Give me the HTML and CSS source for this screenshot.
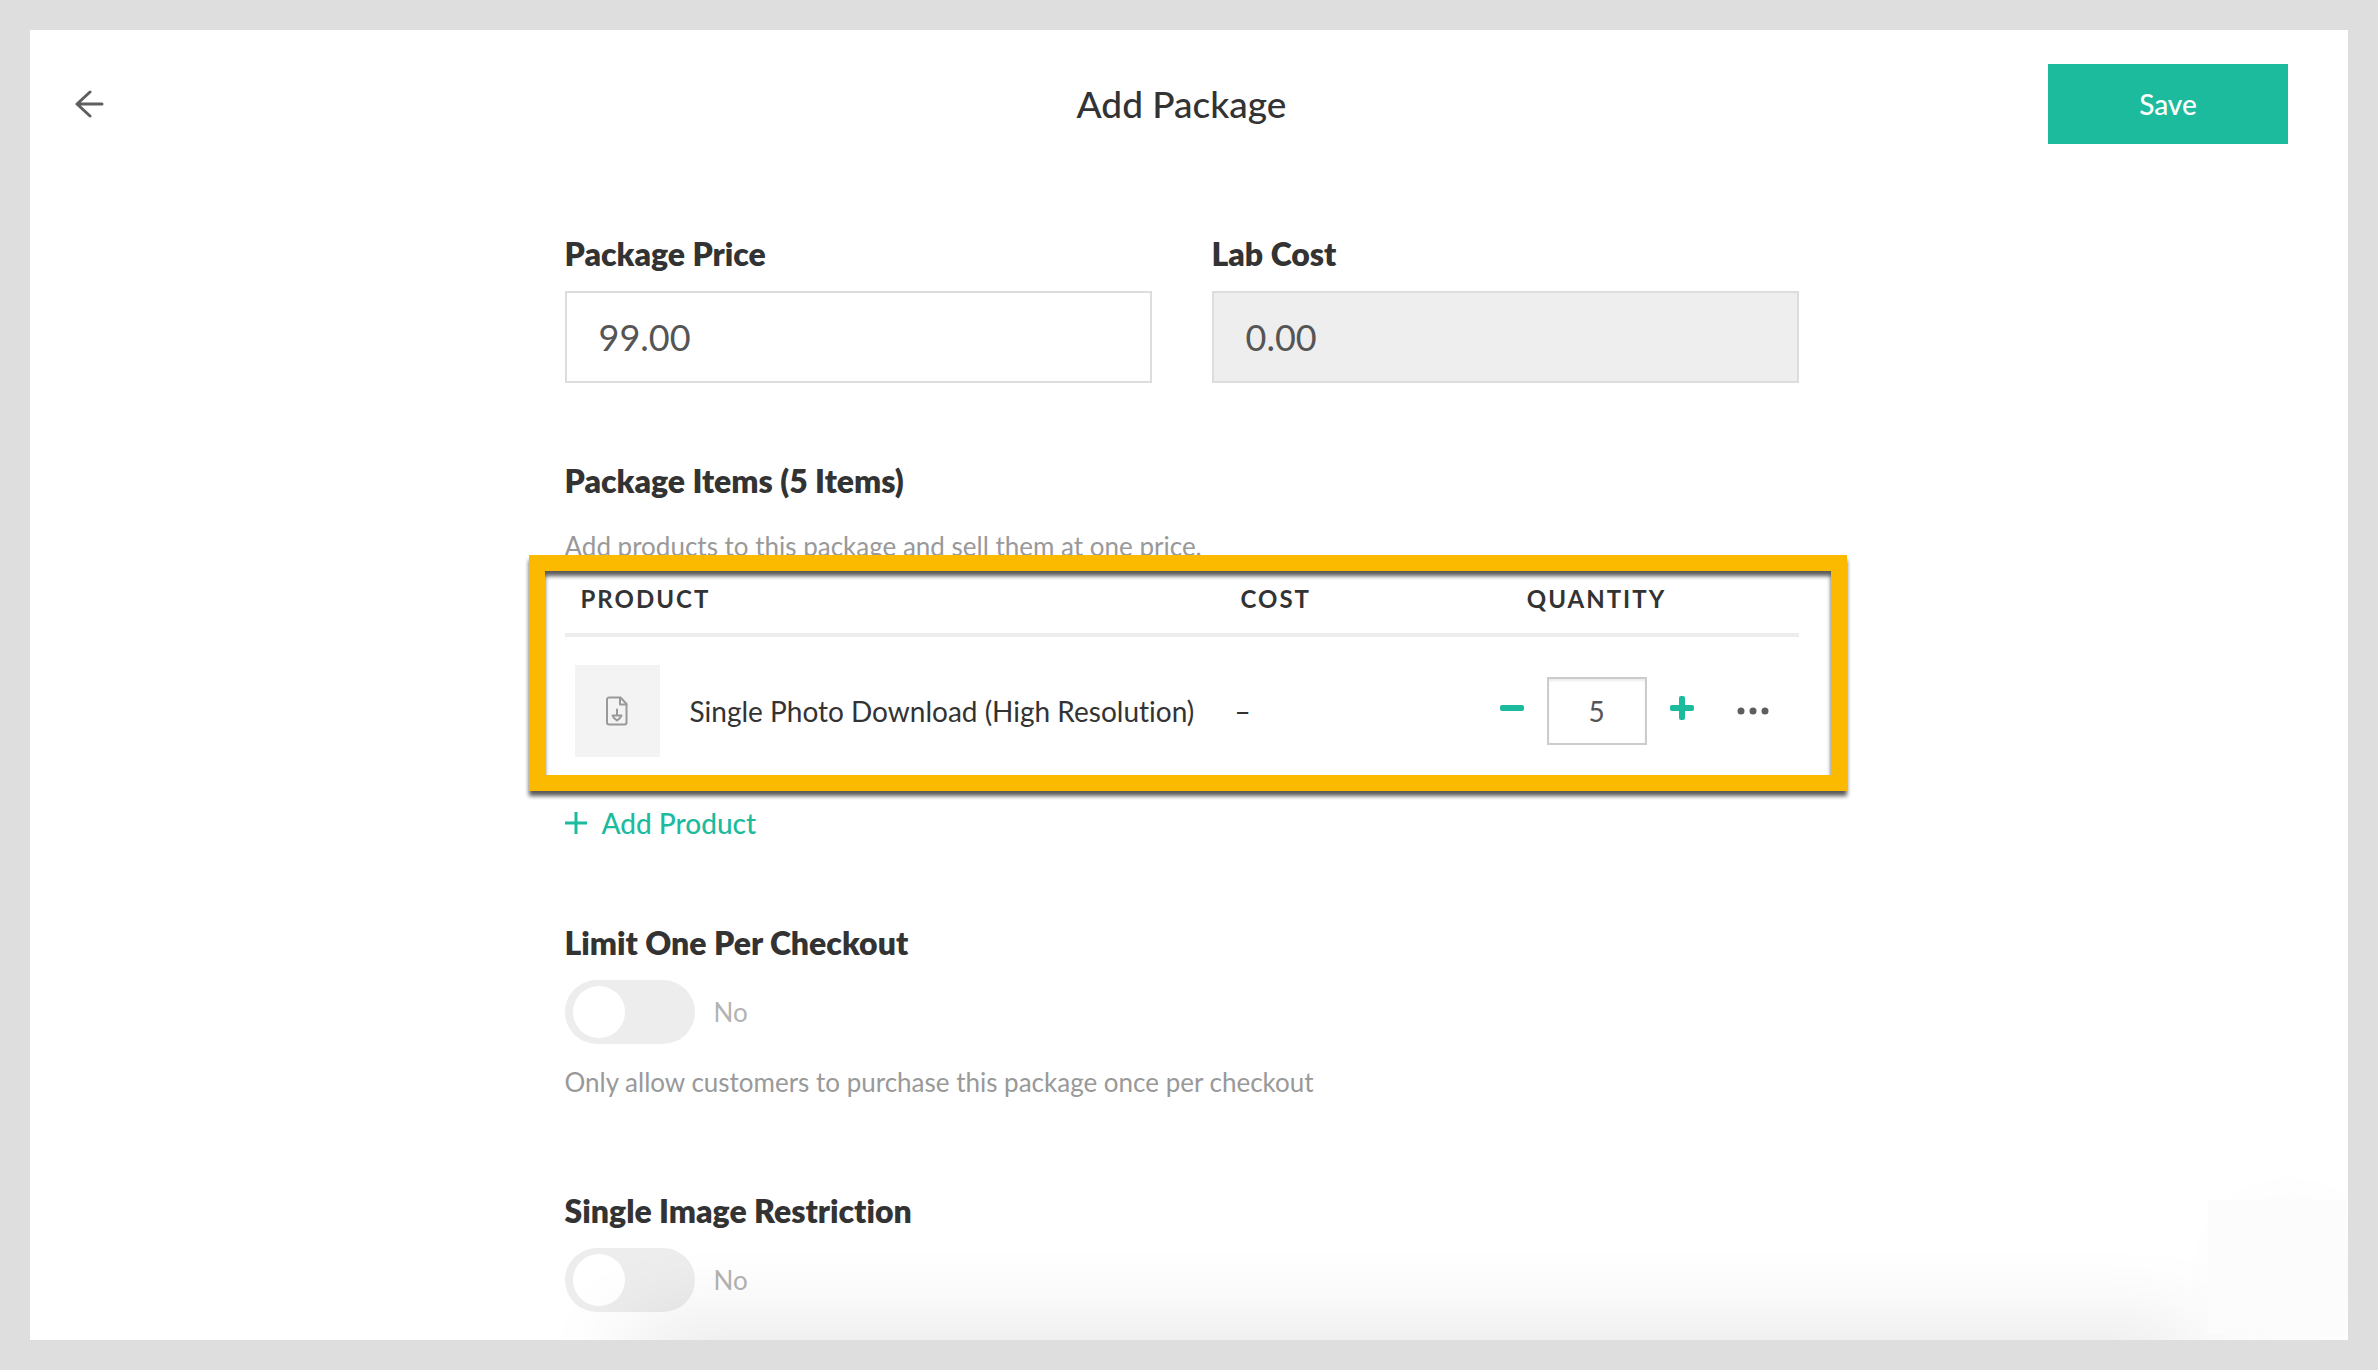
FILE: index.html
```html
<!DOCTYPE html>
<html lang="en">
<head>
  <meta charset="UTF-8" />
  <meta name="viewport" content="width=device-width, initial-scale=1" />
  <title>Add Package</title>
  <link rel="stylesheet" href="styles.css">
</head>
<body>
  <div class="panel">
    <header class="topbar">
      <button type="button" class="icon-btn back-btn" aria-label="Back">
        <svg width="30" height="30" viewBox="0 0 30 30" fill="none" stroke="#5e5e5e" stroke-width="3" stroke-linecap="round" stroke-linejoin="round">
          <path d="M27 15H2M15 3L2 15l13 12" />
        </svg>
      </button>
      <h1>Add Package</h1>
      <button type="submit" form="packageForm" class="save-btn">Save</button>
    </header>

    <form id="packageForm" class="form">
      <div class="price-row">
        <div class="field">
          <label class="title" for="price">Package Price</label>
          <input class="text-input" type="text" id="price" value="99.00" />
        </div>
        <div class="field">
          <label class="title" for="lab_cost">Lab Cost</label>
          <input class="text-input" type="text" id="lab_cost" value="0.00" disabled />
        </div>
      </div>

      <section class="items">
        <h2 class="title">Package Items (5 Items)</h2>
        <p class="hint">Add products to this package and sell them at one price.</p>

        <div class="table-wrap">
          <table class="items-table">
            <thead>
              <tr>
                <th class="col-product">PRODUCT</th>
                <th class="col-cost">COST</th>
                <th class="col-qty">QUANTITY</th>
                <th class="col-menu"></th>
              </tr>
            </thead>
            <tbody>
              <tr>
                <td>
                  <div class="product">
                    <span class="thumb">
                      <svg width="22" height="30" viewBox="0 0 22 30" fill="none" stroke="#999" stroke-width="2" stroke-linejoin="round" stroke-linecap="round">
                        <path d="M3 1.500h11.500L20.500 8v18.500a2 2 0 0 1-2 2H3a2 2 0 0 1-2-2v-23a2 2 0 0 1 2-2z" />
                        <path d="M14 2v6.500h6.500M11 13.500v6M6.500 19.500h9L14 22l-3 2.500L8 22z" />
                      </svg>
                    </span>
                    <span>Single Photo Download (High Resolution)</span>
                  </div>
                </td>
                <td>–</td>
                <td>
                  <div class="qty">
                    <button type="button" class="icon-btn" aria-label="Decrease quantity">
                      <svg width="24" height="24" viewBox="0 0 24 24"><rect x="0" y="9" width="24" height="6" rx="2" fill="#1cbb9d" /></svg>
                    </button>
                    <input class="qty-input" type="text" value="5" aria-label="Quantity" />
                    <button type="button" class="icon-btn" aria-label="Increase quantity">
                      <svg width="24" height="24" viewBox="0 0 24 24" fill="#1cbb9d"><rect x="0" y="9" width="24" height="6" rx="2" /><rect x="9" y="0" width="6" height="24" rx="2" /></svg>
                    </button>
                  </div>
                </td>
                <td class="col-menu">
                  <button type="button" class="icon-btn" aria-label="More">
                    <svg width="32" height="8" viewBox="0 0 32 8" fill="#5e5e5e"><circle cx="4" cy="4" r="3.500" /><circle cx="16" cy="4" r="3.500" /><circle cx="28" cy="4" r="3.500" /></svg>
                  </button>
                </td>
              </tr>
            </tbody>
          </table>
          <div class="highlight"></div>
        </div>

        <button type="button" class="add-btn">
          <svg width="22" height="22" viewBox="0 0 22 22" stroke="#1cbb9d" stroke-width="3"><path d="M0 11h22M11 0v22" /></svg>
          Add Product
        </button>
      </section>

      <section class="option">
        <label class="title" for="limit_one">Limit One Per Checkout</label>
        <div class="toggle-row">
          <input class="toggle" type="checkbox" id="limit_one" />
          <span>No</span>
        </div>
        <p class="hint">Only allow customers to purchase this package once per checkout</p>
      </section>

      <section class="option">
        <label class="title" for="single_image">Single Image Restriction</label>
        <div class="toggle-row">
          <input class="toggle" type="checkbox" id="single_image" />
          <span>No</span>
        </div>
      </section>
    </form>

    <div class="bottom-shade"></div>
    <div class="chat-glow"></div>
    <div class="chat-box"></div>
  </div>
</body>
</html>
```

FILE: styles.css
```css
* {
  box-sizing: border-box;
}

body {
  margin: 0;
  padding: 30px;
  background: #dedede;
  color: #333;
  font-family: Lato, 'Open Sans', sans-serif;
  font-size: 28px;
  font-variant-ligatures: none;
  line-height: 36px;
}

h1, h2, p {
  margin: 0;
}

button, input {
  font-family: inherit;
}

button {
  cursor: pointer;
}

.panel {
  position: relative;
  min-height: calc(100vh - 60px);
  padding: 34px 60px 20px 45px;
  background: #fff;
  overflow: hidden;
}

/* Header */
.topbar {
  display: grid;
  grid-template-columns: 240px 1fr 240px;
  align-items: center;
}

.topbar h1 {
  font-size: 37px;
  font-weight: 500;
  line-height: 40px;
  text-align: center;
}

.icon-btn {
  display: flex;
  padding: 0;
  border: none;
  background: none;
}

.back-btn {
  justify-self: start;
}

.save-btn {
  height: 80px;
  border: none;
  background: #1cbb9d;
  color: #fff;
  font-size: 28px;
  font-weight: 500;
}

/* Form */
.form {
  max-width: 1234px;
  margin: 0 auto;
  padding-top: 90px;
}

.title {
  display: block;
  font-size: 32px;
  font-weight: 800;
  line-height: 40px;
}

.hint {
  color: #999;
  font-size: 26px;
  line-height: 32px;
}

.price-row {
  display: flex;
  gap: 60px;
}

.field {
  flex: 1;
}

.text-input {
  display: block;
  width: 100%;
  height: 92px;
  margin-top: 17px;
  padding: 0 32px;
  border: 2px solid #ddd;
  border-radius: 0;
  background: #fff;
  color: #555;
  font-size: 36px;
}

.text-input:disabled {
  background: #eee;
}

/* Package items */
.items {
  padding-top: 78px;
}

.items .hint {
  margin-top: 29px;
}

.table-wrap {
  position: relative;
  padding-top: 21px;
}

.items-table {
  width: 100%;
  table-layout: fixed;
  border-collapse: separate;
  border-spacing: 0;
}

.items-table th {
  padding: 0 16px 18px;
  border-bottom: 4px solid #ededed;
  font-size: 24px;
  font-weight: 700;
  line-height: 32px;
  letter-spacing: 2px;
  text-align: left;
}

.items-table td {
  padding: 28px 10px;
}

.items-table .col-cost {
  width: 262px;
}

.items-table .col-qty {
  width: 220px;
  text-align: center;
}

.items-table .col-menu {
  width: 92px;
}

.col-menu .icon-btn {
  margin: 0 auto;
}

.product {
  display: flex;
  align-items: center;
  gap: 30px;
  white-space: nowrap;
}

.thumb {
  display: flex;
  align-items: center;
  justify-content: center;
  width: 85px;
  height: 92px;
  background: #f3f3f3;
}

.qty {
  display: flex;
  align-items: center;
  justify-content: center;
  gap: 23px;
}

.qty .icon-btn {
  padding-bottom: 6px;
}

.qty-input {
  width: 100px;
  height: 68px;
  padding: 0;
  border: 2px solid #ccc;
  box-shadow: inset 0 2px 2px rgba(0, 0, 0, 0.08);
  color: #555;
  font-size: 28px;
  text-align: center;
}

.highlight {
  position: absolute;
  top: -7px;
  right: -48px;
  bottom: -6px;
  left: -36px;
  border: 16px solid #fbb900;
  filter: drop-shadow(0 5px 2px rgba(0, 0, 0, 0.65));
  pointer-events: none;
}

.add-btn {
  display: flex;
  align-items: center;
  gap: 15px;
  margin-top: 20px;
  padding: 0;
  border: none;
  background: none;
  color: #1cbb9d;
  font-size: 28px;
  font-weight: 500;
  line-height: 36px;
}

/* Options */
.option {
  padding-top: 82px;
}

.option + .option {
  padding-top: 93px;
}

.toggle-row {
  display: flex;
  align-items: center;
  gap: 19px;
  margin-top: 17px;
  color: #b3b3b3;
  font-size: 26px;
}

.option .hint {
  margin-top: 22px;
}

.toggle {
  appearance: none;
  width: 130px;
  height: 64px;
  margin: 0;
  padding: 6px 8px;
  border-radius: 32px;
  background: #ededed;
  cursor: pointer;
}

.toggle::before {
  content: '';
  display: block;
  width: 52px;
  height: 52px;
  border-radius: 50%;
  background: #fff;
}

.toggle:checked {
  background: #1cbb9d;
}

.toggle:checked::before {
  margin-left: auto;
}

/* Soft shadows along the bottom edge */
.bottom-shade {
  position: absolute;
  right: 150px;
  bottom: -40px;
  left: 600px;
  height: 40px;
  box-shadow: 0 0 90px rgba(0, 0, 0, 0.18);
  pointer-events: none;
}

.chat-glow {
  position: absolute;
  right: 8px;
  bottom: 15px;
  width: 100px;
  height: 100px;
  border-radius: 50%;
  box-shadow: 0 0 80px rgba(0, 0, 0, 0.06);
  pointer-events: none;
}

.chat-box {
  position: absolute;
  right: 2px;
  bottom: 6px;
  width: 138px;
  height: 134px;
  background: #fcfcfc;
}
```
